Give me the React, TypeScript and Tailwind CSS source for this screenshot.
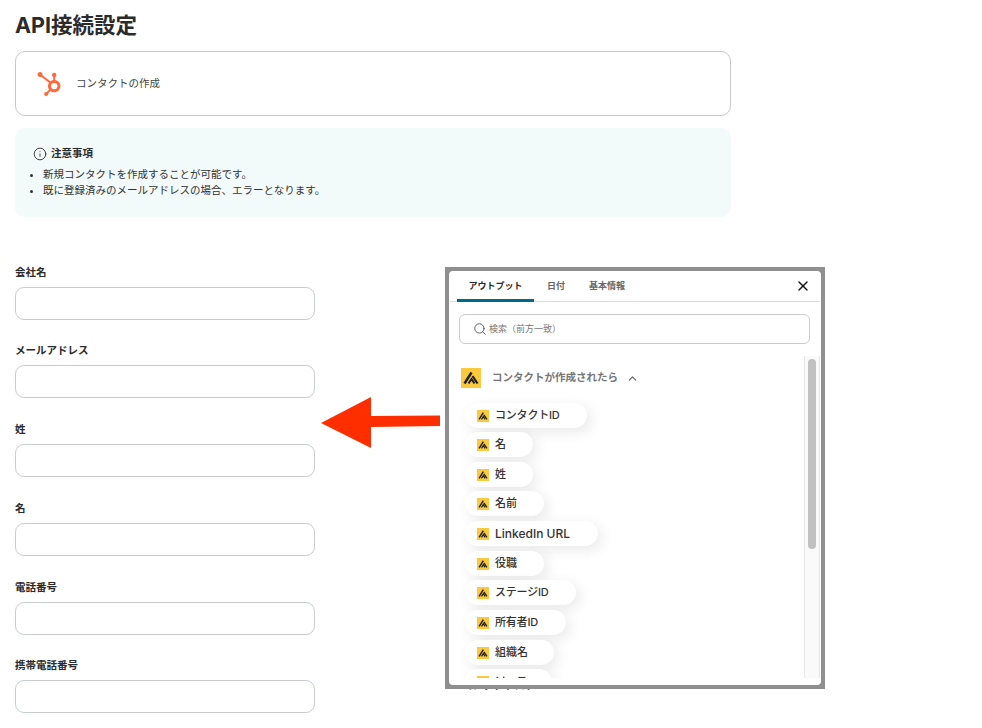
import React from 'react'
import { ChevronUp, Info, Search, X } from 'lucide-react'
import { SiHubspot } from 'react-icons/si'

const fields = ['会社名', 'メールアドレス', '姓', '名', '電話番号', '携帯電話番号']

const outputs = [
  { name: 'コンタクトID', width: 'w-[122px]', gap: 'mb-[4px]', size: 'text-[11px] tracking-[-0.2px]' },
  { name: '名', width: 'w-[68px]', gap: 'mb-[5px]', size: 'text-[11px]' },
  { name: '姓', width: 'w-[68px]', gap: 'mb-[4px]', size: 'text-[11px]' },
  { name: '名前', width: 'w-[79px]', gap: 'mb-[5px]', size: 'text-[11px]' },
  { name: 'LinkedIn URL', width: 'w-[133px]', gap: 'mb-[5px]', size: 'text-[12px]' },
  { name: '役職', width: 'w-[79px]', gap: 'mb-[4px]', size: 'text-[11px]' },
  { name: 'ステージID', width: 'w-[111px]', gap: 'mb-[5px]', size: 'text-[11px] tracking-[-0.2px]' },
  { name: '所有者ID', width: 'w-[101px]', gap: 'mb-[5px]', size: 'text-[11px] tracking-[-0.2px]' },
  { name: '組織名', width: 'w-[89px]', gap: 'mb-[4px]', size: 'text-[11px]' },
  { name: 'ソース', width: 'w-[87px]', gap: 'mb-[4px]', size: 'text-[11px]' },
]

const YoomMark = ({ className }: { className: string }) => (
  <span className={`flex shrink-0 items-center justify-center bg-[#fbc93d] ${className}`}>
    <svg viewBox="0 0 20 20" className="h-full w-full" fill="none" stroke="#1d1d1f">
      <path d="M3.5 15.5 L10.5 4.5" strokeWidth="2.4" />
      <path d="M7.5 15.5 L10.5 11 L13.5 15.5" strokeWidth="2" />
      <path d="M11.5 8 L16.5 15.5" strokeWidth="2.2" />
    </svg>
  </span>
)

const App = () => {
  return (
    <div className="relative h-[728px] w-[982px] overflow-hidden bg-white pl-[15px] font-['Inter','Noto_Sans_CJK_JP',sans-serif] text-[#2b2b2b]">
      <h1 className="flex h-[51px] items-center pt-[1px] text-[21.5px] font-bold leading-none">API接続設定</h1>

      <div className="flex h-[65px] w-[716px] items-center gap-[15px] rounded-[10px] border border-[#c9c9c9] pl-[21px]">
        <SiHubspot className="h-[24px] w-[24px] text-[#ff6a3c]" />
        <span className="text-[10.5px] text-[#444]">コンタクトの作成</span>
      </div>

      <div className="mt-[12px] h-[89px] w-[716px] rounded-[10px] bg-[#f2fafa] pl-[18px] pt-[18px]">
        <div className="flex items-center gap-[4px] text-[10.5px] font-bold">
          <Info size={14} strokeWidth={1.5} />
          注意事項
        </div>
        <ul className="-ml-[1px] mt-[5px] list-disc pl-[11px] text-[10.5px] leading-[16px] text-[#333]">
          <li>新規コンタクトを作成することが可能です。</li>
          <li>既に登録済みのメールアドレスの場合、エラーとなります。</li>
        </ul>
      </div>

      <div className="mt-[47.75px] grid w-[300px] auto-rows-[78.7px]">
        {fields.map((field) => (
          <div key={field} className="flex flex-col">
            <label className="mb-[6px] h-[16px] text-[10.5px] font-bold leading-[16px]">{field}</label>
            <input className="h-[33px] w-full rounded-[9px] border border-[#c9ccd0] bg-white" />
          </div>
        ))}
      </div>

      {/* label of the right column, mostly hidden by the popup */}
      <span className="absolute left-[462px] top-[678px] text-[10.5px] font-bold">コンタクトステージ</span>

      <svg className="absolute left-[320px] top-[396px]" width="122" height="54" viewBox="0 0 122 54">
        <polygon points="1,27 51,1 51,20 120,19.5 120,30 51,31 51,52" fill="#ff2e00" />
      </svg>

      <div className="absolute left-[445px] top-[267px] h-[422px] w-[380px] border-[4px] border-[#8f8f8f] bg-[#8f8f8f]">
        <div className="flex h-full w-full flex-col overflow-hidden rounded-[4px] bg-white">
          <div className="relative mx-[1px] flex h-[31px] shrink-0 items-start border-b border-[#dedede] pl-[7px] text-[9px] font-bold">
            <div className="flex h-[31px] w-[77px] items-start justify-center border-b-[3px] border-[#006a8a] pt-[8px]">アウトプット</div>
            <div className="ml-[13px] pt-[8px] text-[#666]">日付</div>
            <div className="ml-[24px] pt-[8px] text-[#666]">基本情報</div>
            <X size={16} strokeWidth={2} className="absolute right-[9px] top-[7px] text-[#111]" />
          </div>

          <div className="ml-[10px] mr-[11px] mt-[12px] flex h-[30px] shrink-0 items-center rounded-[6px] border border-[#c9ccd0] pl-[13px] text-[9px] text-[#777]">
            <Search size={14} strokeWidth={1.4} className="mr-[2px] text-[#444]" />
            検索（前方一致）
          </div>

          <div className="mt-[12px] flex min-h-0 flex-1">
            <div className="min-h-0 flex-1 overflow-hidden pl-[12px] pt-[12px]">
              <div className="flex h-[20px] items-center">
                <YoomMark className="h-[20px] w-[20px]" />
                <span className="ml-[11px] text-[10.5px] font-bold text-[#777]">コンタクトが作成されたら</span>
                <ChevronUp size={13} strokeWidth={2.2} className="ml-[8px] text-[#666]" />
              </div>
              <div className="ml-[4px] mt-[15px] flex flex-col items-start">
                {outputs.map((item) => (
                  <div
                    key={item.name}
                    className={`flex h-[25px] shrink-0 items-center rounded-full bg-white pl-[12px] font-medium text-[#333] shadow-[4px_4px_14px_rgba(0,0,0,0.09)] ${item.size} ${item.width} ${item.gap}`}
                  >
                    <YoomMark className="mr-[6px] h-[12px] w-[12px]" />
                    {item.name}
                  </div>
                ))}
              </div>
            </div>
            <div className="mr-[1px] h-full w-[16px] shrink-0 border-x border-[#e6e6e6] bg-[#fafafa] px-[3px] pt-[3px]">
              <div className="h-[190px] w-[8px] rounded-full bg-[#c1c1c1]" />
            </div>
          </div>
          <div className="h-[7px] shrink-0" />
        </div>
      </div>
    </div>
  )
}

export default App
